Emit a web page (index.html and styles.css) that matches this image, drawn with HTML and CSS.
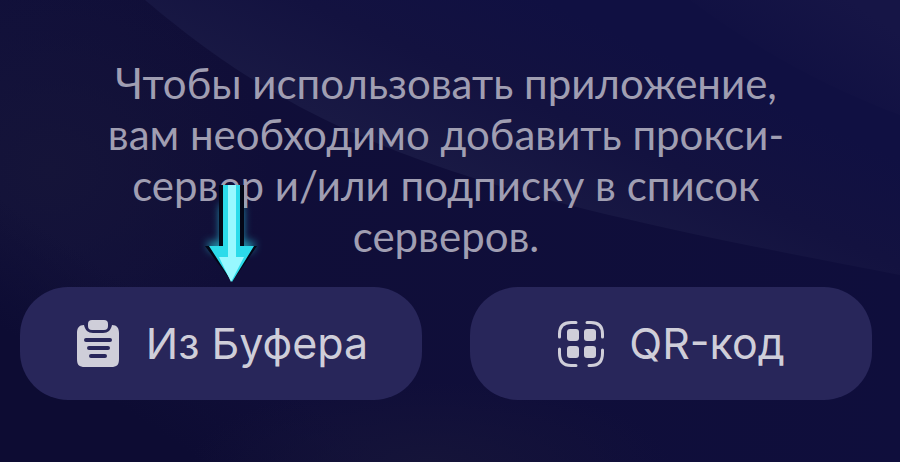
FILE: index.html
```
<!DOCTYPE html>
<html lang="ru">
<head>
    <meta charset="UTF-8">
    <meta name="viewport" content="width=device-width, initial-scale=1.0">
    <title>Добавить сервер</title>
    <link rel="stylesheet" href="styles.css">
</head>
<body>
    <svg class="waves" viewBox="0 0 900 462" preserveAspectRatio="none" aria-hidden="true">
        <defs>
            <linearGradient id="base" x1="0" y1="0" x2="1" y2="0">
                <stop offset="0" stop-color="#11103a"/>
                <stop offset=".25" stop-color="#100e38"/>
                <stop offset="1" stop-color="#0f0e3c"/>
            </linearGradient>
            <linearGradient id="wave" gradientUnits="userSpaceOnUse" x1="420" y1="160" x2="500" y2="-20">
                <stop offset="0" stop-color="#191944"/>
                <stop offset=".5" stop-color="#131240"/>
                <stop offset="1" stop-color="#101042"/>
            </linearGradient>
            <linearGradient id="corner" gradientUnits="userSpaceOnUse" x1="790" y1="90" x2="850" y2="0">
                <stop offset="0" stop-color="#161546" stop-opacity="0"/>
                <stop offset="1" stop-color="#161546"/>
            </linearGradient>
            <radialGradient id="left">
                <stop offset="0" stop-color="#151439"/>
                <stop offset="1" stop-color="#151439" stop-opacity="0"/>
            </radialGradient>
            <linearGradient id="low" gradientUnits="userSpaceOnUse" x1="110" y1="400" x2="170" y2="310">
                <stop offset="0" stop-color="#0d0c33"/>
                <stop offset="1" stop-color="#0d0c33" stop-opacity="0"/>
            </linearGradient>
        </defs>
        <rect width="900" height="462" fill="url(#base)"/>
        <ellipse cx="50" cy="170" rx="220" ry="190" fill="url(#left)"/>
        <rect width="900" height="462" fill="url(#low)"/>
        <ellipse cx="430" cy="462" rx="240" ry="80" fill="url(#left)"/>
        <path d="M145 0C200 46 235 71 300 107C440 181 600 218 900 275V0z" fill="url(#wave)"/>
        <path d="M690 0C750 45 820 85 900 115V0z" fill="url(#corner)"/>
    </svg>

    <main class="empty-state">
        <p class="hint">Чтобы использовать приложение, вам необходимо добавить прокси-сервер и/или подписку в список серверов.</p>
        <div class="actions">
            <div class="action">
                <svg class="arrow" width="62" height="108" viewBox="0 0 62 108" aria-hidden="true">
                    <path class="arrow-glow" d="M20 30H43V67H55L52 76H10L7 67H20z"/>
                    <path class="arrow-shadow" d="M19 10H44V71H57L32 107L5 71H19z"/>
                    <path class="arrow-body" d="M23 10H40V71H54L32 107L9 71H23z"/>
                    <path class="arrow-core" d="M28 10H36V82H44L31 107L19 82H28z"/>
                </svg>
                <button class="button" type="button">
                    <svg class="icon" width="48" height="50" viewBox="0 0 48 50" aria-hidden="true">
                        <path d="M10 6C5 6 3 9 3 14V40C3 46 5 48 11 48H37C43 48 45 46 45 40V14C45 9 43 6 38 6C37 11 34 14 29 14H19C14 14 11 11 10 6z" fill="currentColor"/>
                        <rect x="14" y="1" width="20" height="10" rx="4" fill="currentColor"/>
                        <path class="icon-lines" d="M12 21H36M15 29H34M17 37H31"/>
                    </svg>
                    Из Буфера
                </button>
            </div>
            <div class="action">
                <button class="button" type="button">
                    <svg class="icon" width="48" height="50" viewBox="0 0 48 50" aria-hidden="true">
                        <path class="icon-frame" d="M2.500 18V15Q2.500 3.500 14 3.500H19M30 3.500H34Q45.500 3.500 45.500 15V18M45.500 31V34Q45.500 46.500 34 46.500H32M19 46.500H14Q2.500 46.500 2.500 34V30"/>
                        <g fill="currentColor">
                            <rect x="10" y="10" width="12" height="12" rx="3"/>
                            <rect x="27" y="10" width="12" height="12" rx="3"/>
                            <rect x="10" y="27" width="12" height="12" rx="3"/>
                            <rect x="27" y="27" width="12" height="12" rx="3"/>
                        </g>
                    </svg>
                    QR-код
                </button>
            </div>
        </div>
    </main>
</body>
</html>
```
FILE: styles.css
```
* {
    box-sizing: border-box;
    padding: 0;
    margin: 0;
}
body {
    min-height: 100vh;
    background: #100e38;
}
.waves {
    position: absolute;
    top: 0;
    left: 0;
    width: 100%;
    height: 100%;
    z-index: -1;
}
.empty-state {
    padding: 58px 28px 58px 20px;
}
.hint {
    max-width: 720px;
    margin: 0 auto 25px;
    color: #a09eb2;
    font-family: Lato, sans-serif;
    font-size: 42px;
    line-height: 51px;
    text-align: center;
}
.actions {
    display: flex;
    gap: 48px;
}
.action {
    position: relative;
    flex: 1;
}
.button {
    display: flex;
    align-items: center;
    justify-content: center;
    gap: 24px;
    width: 100%;
    padding: 30px 16px;
    border: 0;
    border-radius: 48px;
    background: #28265a;
    color: #cfced9;
    font-family: Inter, sans-serif;
    font-size: 43px;
    line-height: 53px;
    cursor: pointer;
}
.icon {
    flex: none;
}
.icon-lines {
    fill: none;
    stroke: #28265a;
    stroke-width: 4;
    stroke-linecap: round;
}
.icon-frame {
    fill: none;
    stroke: currentColor;
    stroke-width: 3;
    stroke-linecap: round;
}
/* points down at the clipboard button */
.arrow {
    position: absolute;
    bottom: 100%;
    left: 50%;
    margin: 0 0 4px -21px;
    overflow: visible;
    pointer-events: none;
}
.arrow-glow {
    fill: #2bdcec;
    opacity: .7;
    filter: blur(4px);
}
.arrow-shadow {
    fill: #030716;
}
.arrow-body {
    fill: #2cdbea;
}
.arrow-core {
    fill: #98f8ff;
}
```
